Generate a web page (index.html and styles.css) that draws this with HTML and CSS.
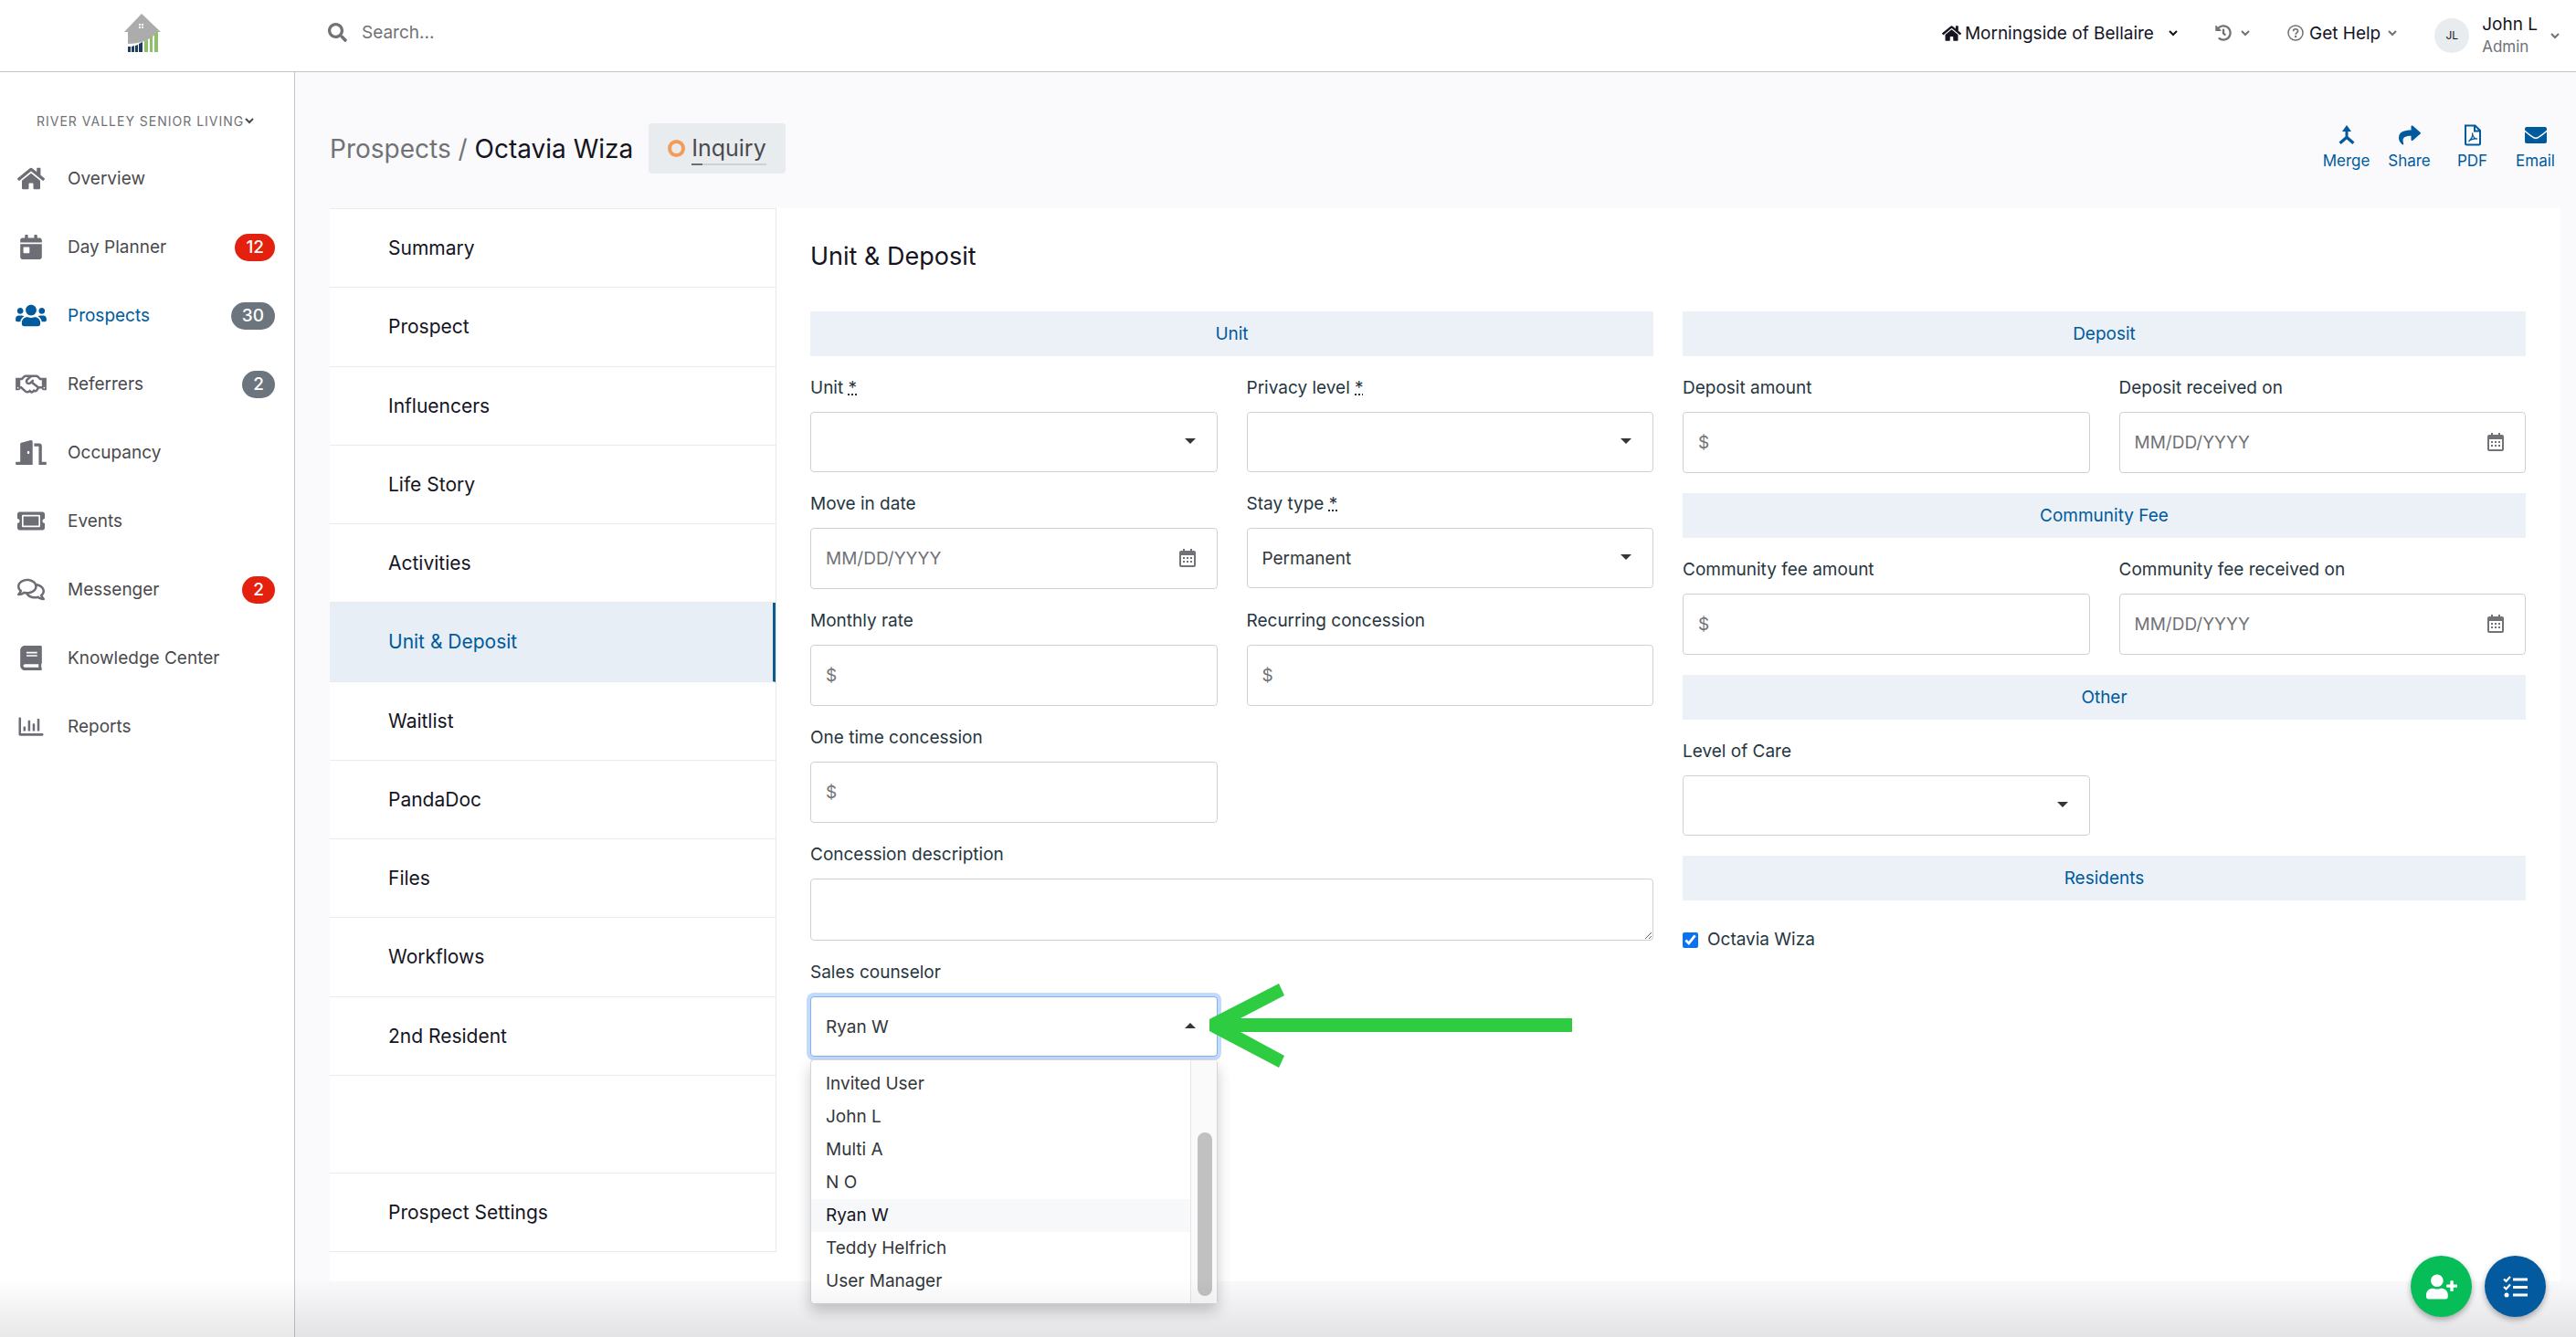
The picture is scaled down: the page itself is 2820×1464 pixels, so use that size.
FILE: index.html
```html
<!DOCTYPE html>
<html lang="en">
<head>
  <meta charset="utf-8">
  <title>Octavia Wiza - Unit &amp; Deposit</title>
  <link rel="stylesheet" href="styles.css">
</head>
<body>
  <!-- shared icons -->
  <svg class="sprite" aria-hidden="true">
    <symbol id="i-home" viewBox="0 0 576 512"><path d="M280.37 148.26L96 300.11V464a16 16 0 0 0 16 16l112.06-.29a16 16 0 0 0 15.92-16V368a16 16 0 0 1 16-16h64a16 16 0 0 1 16 16v95.64a16 16 0 0 0 16 16.05L464 480a16 16 0 0 0 16-16V300L295.67 148.26a12.19 12.19 0 0 0-15.3 0zM571.6 251.47L488 182.56V44.05a12 12 0 0 0-12-12h-56a12 12 0 0 0-12 12v72.61L318.47 43a48 48 0 0 0-61 0L4.34 251.47a12 12 0 0 0-1.6 16.9l25.5 31A12 12 0 0 0 45.15 301l235.22-193.74a12.19 12.19 0 0 1 15.3 0L530.9 301a12 12 0 0 0 16.9-1.6l25.5-31a12 12 0 0 0-1.7-16.93z"/></symbol>
    <symbol id="i-chevron" viewBox="0 0 10 8"><path d="M1 2l4 4 4-4" fill="none" stroke="currentColor" stroke-width="2"/></symbol>
    <symbol id="i-calendar" viewBox="0 0 18 20"><path fill-rule="evenodd" d="M4 0h2v2h6V0h2v2h2a2 2 0 0 1 2 2v14a2 2 0 0 1-2 2H2a2 2 0 0 1-2-2V4a2 2 0 0 1 2-2h2zM2 7v11h14V7z"/><path d="M4 9h2v2H4zm4 0h2v2H8zm4 0h2v2h-2zM4 13h2v2H4zm4 0h2v2H8zm4 0h2v2h-2z"/></symbol>
  </svg>

  <header class="topbar">
    <a class="logo" href="#" aria-label="Home">
      <svg width="40" height="42" viewBox="0 0 40 42">
        <path fill="#acacac" d="M19 0L40 20h-3.500C29 29 17 33 4 33V20H0z"/>
        <path fill="#fff" d="M16 11h2v2h-2zm3 0h2v2h-2zm-3 3h2v2h-2zm3 0h2v2h-2z"/>
        <path fill="#1f3c5f" d="M4 36h3v6H4zm4 0l3-1v7H8zm4-1l3-1v8h-3zm4-2l4-2v11h-4z"/>
        <path fill="#8cc069" d="M22 30l4-2v14h-4zm6-4l3-2v18h-3zm5-4l4-3v23h-4z"/>
      </svg>
    </a>
    <label class="search">
      <svg class="search-icon" viewBox="0 0 512 512"><path d="M505 442.7L405.300 343c-4.500-4.500-10.600-7-17-7H372c27.600-35.300 44-79.700 44-128C416 93.100 322.900 0 208 0S0 93.100 0 208s93.100 208 208 208c48.300 0 92.700-16.400 128-44v16.300c0 6.400 2.500 12.500 7 17l99.700 99.700c9.400 9.400 24.600 9.400 33.900 0l28.300-28.300c9.400-9.400 9.400-24.600.1-34zM208 336c-70.700 0-128-57.200-128-128 0-70.700 57.200-128 128-128 70.700 0 128 57.200 128 128 0 70.700-57.200 128-128 128z"/></svg>
      <input type="text" placeholder="Search..." aria-label="Search">
    </label>
    <div class="top-links">
      <button class="top-btn">
        <svg class="top-home" viewBox="0 0 576 512"><use href="#i-home"/></svg>
        Morningside of Bellaire
        <svg class="chevron chevron-far"><use href="#i-chevron"/></svg>
      </button>
      <button class="top-btn muted" aria-label="History">
        <svg class="top-icon" viewBox="0 0 512 512"><path d="M504 255.531c.253 136.640-111.180 248.372-247.820 248.468-59.015.042-113.223-20.530-155.822-54.911-11.077-8.940-11.905-25.541-1.839-35.607l11.267-11.267c8.609-8.609 22.353-9.551 31.891-1.984C173.062 425.135 212.781 440 256 440c101.705 0 184-82.311 184-184 0-101.705-82.311-184-184-184-48.814 0-93.149 18.969-126.068 49.932l50.754 50.754c10.080 10.080 2.941 27.314-11.313 27.314H24c-8.837 0-16-7.163-16-16V38.627c0-14.254 17.234-21.393 27.314-11.314l49.372 49.372C129.209 34.136 189.552 8 256 8c136.810 0 247.747 110.780 248 247.531zm-180.912 78.784l9.823-12.630c8.138-10.463 6.253-25.542-4.210-33.679L288 256.349V152c0-13.255-10.745-24-24-24h-16c-13.255 0-24 10.745-24 24v135.651l65.409 50.874c10.463 8.137 25.541 6.253 33.679-4.210z"/></svg>
        <svg class="chevron"><use href="#i-chevron"/></svg>
      </button>
      <button class="top-btn">
        <svg class="top-icon muted" viewBox="0 0 18 18"><circle cx="9" cy="9" r="8" fill="none" stroke="currentColor" stroke-width="1.500"/><path d="M6.500 7.200C6.500 4 11.600 4 11.600 7c0 1.800-2.500 1.900-2.500 3.700" fill="none" stroke="currentColor" stroke-width="1.700"/><circle cx="9.100" cy="13" r="1.200"/></svg>
        Get Help
        <svg class="chevron muted"><use href="#i-chevron"/></svg>
      </button>
      <button class="top-btn user">
        <span class="avatar">JL</span>
        <span class="user-text"><span class="user-name">John L</span><span class="user-role">Admin</span></span>
        <svg class="chevron muted"><use href="#i-chevron"/></svg>
      </button>
    </div>
  </header>

  <div class="layout">
    <aside class="sidebar">
      <button class="org">River Valley Senior Living<svg class="chevron"><use href="#i-chevron"/></svg></button>
      <nav>
        <a class="side-link" href="#"><svg class="side-icon"><use href="#i-home"/></svg>Overview</a>
        <a class="side-link" href="#"><svg class="side-icon" viewBox="0 0 448 512"><path d="M0 464c0 26.500 21.500 48 48 48h352c26.500 0 48-21.500 48-48V192H0v272zm64-192c0-8.800 7.200-16 16-16h96c8.800 0 16 7.200 16 16v96c0 8.800-7.200 16-16 16H80c-8.800 0-16-7.200-16-16v-96zM400 64h-48V16c0-8.800-7.200-16-16-16h-32c-8.800 0-16 7.200-16 16v48H160V16c0-8.800-7.200-16-16-16h-32c-8.800 0-16 7.200-16 16v48H48C21.500 64 0 85.500 0 112v48h448v-48c0-26.500-21.500-48-48-48z"/></svg>Day Planner<span class="badge red">12</span></a>
        <a class="side-link active" href="#"><svg class="side-icon wide" viewBox="0 0 640 512"><path d="M96 224c35.300 0 64-28.700 64-64s-28.700-64-64-64-64 28.700-64 64 28.700 64 64 64zm448 0c35.300 0 64-28.700 64-64s-28.700-64-64-64-64 28.700-64 64 28.700 64 64 64zm32 32h-64c-17.600 0-33.500 7.100-45.100 18.600 40.300 22.100 68.900 62 75.100 109.400h66c17.700 0 32-14.300 32-32v-32c0-35.300-28.700-64-64-64zm-256 0c61.900 0 112-50.100 112-112S381.900 32 320 32 208 82.100 208 144s50.100 112 112 112zm76.800 32h-8.300c-20.800 10-43.900 16-68.500 16s-47.600-6-68.500-16h-8.300C179.600 288 128 339.600 128 403.200V432c0 26.500 21.500 48 48 48h288c26.500 0 48-21.500 48-48v-28.800c0-63.600-51.600-115.200-115.200-115.200zm-223.700-13.400C161.500 263.100 145.600 256 128 256H64c-35.300 0-64 28.700-64 64v32c0 17.700 14.300 32 32 32h65.900c6.300-47.400 34.900-87.300 75.200-109.400z"/></svg>Prospects<span class="badge">30</span></a>
        <a class="side-link" href="#"><svg class="side-icon wide" viewBox="0 0 640 512"><path d="M519.2 127.9l-47.6-47.6A56.252 56.252 0 0 0 432 64H205.200c-14.800 0-29.100 5.900-39.600 16.300L118 127.900H0v255.700h64c17.600 0 31.800-14.200 31.900-31.700h9.100l84.600 76.400c30.900 25.100 73.800 25.700 105.600 3.800 12.500 10.800 26 15.900 41.100 15.900 18.200 0 35.300-7.400 48.800-24 22.100 8.700 48.200 2.600 64-16.800l26.200-32.300c5.600-6.900 9.100-14.800 10.900-23h57.900c.1 17.500 14.400 31.700 31.900 31.700h64V127.900H519.200zM48 351.600c-8.800 0-16-7.200-16-16s7.200-16 16-16 16 7.200 16 16c0 8.900-7.200 16-16 16zm390-6.900l-26.100 32.200c-2.800 3.400-7.800 4-11.300 1.200l-23.900-19.400-30 36.500c-6 7.300-15 4.800-18 2.400l-36.800-31.500-15.600 19.200c-13.900 17.100-39.200 19.700-55.300 6.600l-97.300-88H96V175.800h41.900l61.700-61.600c2-.8 3.700-1.500 5.700-2.300H262l-38.700 35.500c-29.400 26.900-31.100 72.300-4.400 101.300 14.800 16.200 61.200 41.200 101.500 4.400l8.200-7.500 108.200 87.800c3.400 2.800 3.900 7.900 1.200 11.300zm106-40.800h-69.200c-2.300-2.800-4.900-5.400-7.700-7.700l-102.700-83.400 12.500-11.400c6.500-6 7-16.100 1-22.600L367 167.100c-6-6.500-16.100-6.900-22.600-1l-55.200 50.600c-9.500 8.700-25.700 9.400-34.600 0-9.300-9.900-8.500-25.100 1.200-33.900l65.600-60.100c7.400-6.800 17-10.500 27-10.500l83.700-.2c2.100 0 4.100.8 5.500 2.300l61.700 61.600H544v128zm48 47.700c-8.800 0-16-7.200-16-16s7.200-16 16-16 16 7.200 16 16c0 8.900-7.200 16-16 16z"/></svg>Referrers<span class="badge">2</span></a>
        <a class="side-link" href="#"><svg class="side-icon wide" viewBox="0 0 640 512"><path d="M624 448h-80V113.450C544 86.190 522.470 64 496 64H384v64h96v384h144c8.840 0 16-7.160 16-16v-32c0-8.840-7.160-16-16-16zM312.240 1.010l-192 49.740C105.990 54.440 96 67.700 96 82.920V448H16c-8.840 0-16 7.160-16 16v32c0 8.840 7.160 16 16 16h336V33.180c0-21.580-19.560-37.410-39.760-32.170zM264 288c-13.250 0-24-14.330-24-32s10.750-32 24-32 24 14.330 24 32-10.750 32-24 32z"/></svg>Occupancy</a>
        <a class="side-link" href="#"><svg class="side-icon" viewBox="0 0 576 512"><path d="M128 160h320v192H128V160zm400 96c0 26.510 21.490 48 48 48v96c0 26.510-21.490 48-48 48H48c-26.510 0-48-21.490-48-48v-96c26.510 0 48-21.490 48-48s-21.490-48-48-48v-96c0-26.510 21.490-48 48-48h480c26.510 0 48 21.490 48 48v96c-26.510 0-48 21.490-48 48zm-48-104c0-13.255-10.745-24-24-24H120c-13.255 0-24 10.745-24 24v208c0 13.255 10.745 24 24 24h336c13.255 0 24-10.745 24-24V152z"/></svg>Events</a>
        <a class="side-link" href="#"><svg class="side-icon" viewBox="0 0 576 512"><path d="M532 386.200c27.500-27.100 44-61.100 44-98.200 0-80-76.500-146.100-176.200-157.900C368.300 72.500 294.300 32 208 32 93.100 32 0 103.600 0 192c0 37 16.500 71 44 98.200-15.300 30.700-37.300 54.500-37.700 54.900-6.300 6.700-8.100 16.500-4.400 25 3.600 8.500 12 14 21.200 14 53.500 0 96.700-20.200 125.200-38.800 9.200 2.100 18.700 3.700 28.400 4.900C208.100 407.600 281.800 448 368 448c20.800 0 40.800-2.400 59.800-6.800C456.300 459.700 499.400 480 553 480c9.200 0 17.500-5.500 21.200-14 3.600-8.500 1.900-18.300-4.400-25-.4-.3-22.500-24.100-37.800-54.800zm-392.800-92.300L122.100 305c-14.100 9.100-28.500 16.300-43.100 21.400 2.700-4.700 5.400-9.700 8-14.800l15.500-31.100L77.700 256C64.200 242.600 48 220.700 48 192c0-60.700 73.300-112 160-112s160 51.300 160 112-73.300 112-160 112c-16.500 0-33-1.900-49-5.600l-19.800-4.500zM498.300 352l-24.700 24.400 15.500 31.100c2.600 5.100 5.300 10.100 8 14.800-14.600-5.100-29-12.300-43.100-21.400l-17.100-11.100-19.900 4.600c-16 3.700-32.500 5.600-49 5.600-54 0-102.200-20.100-131.300-49.700C338 339.500 416 272.900 416 192c0-3.400-.4-6.700-.7-10C479.700 196.500 528 238.800 528 288c0 28.700-16.200 50.600-29.700 64z"/></svg>Messenger<span class="badge red">2</span></a>
        <a class="side-link" href="#"><svg class="side-icon" viewBox="0 0 448 512"><path d="M448 360V24c0-13.300-10.700-24-24-24H96C43 0 0 43 0 96v320c0 53 43 96 96 96h328c13.300 0 24-10.700 24-24v-16c0-7.500-3.500-14.300-8.900-18.700-4.200-15.400-4.200-59.300 0-74.700 5.400-4.300 8.900-11.100 8.900-18.600zM128 134c0-3.300 2.700-6 6-6h212c3.300 0 6 2.700 6 6v20c0 3.300-2.700 6-6 6H134c-3.300 0-6-2.700-6-6v-20zm0 64c0-3.300 2.700-6 6-6h212c3.300 0 6 2.700 6 6v20c0 3.300-2.700 6-6 6H134c-3.300 0-6-2.700-6-6v-20zm253.400 250H96c-17.700 0-32-14.300-32-32 0-17.600 14.400-32 32-32h285.400c-1.900 17.100-1.900 46.900 0 64z"/></svg>Knowledge Center</a>
        <a class="side-link" href="#"><svg class="side-icon" viewBox="0 0 512 512"><path d="M396.800 352h22.400c6.400 0 12.800-6.400 12.800-12.800V108.800c0-6.400-6.400-12.800-12.800-12.800h-22.400c-6.400 0-12.800 6.400-12.800 12.800v230.400c0 6.400 6.400 12.800 12.800 12.800zm-192 0h22.400c6.400 0 12.800-6.400 12.800-12.800V140.800c0-6.400-6.400-12.800-12.800-12.800h-22.400c-6.400 0-12.800 6.400-12.800 12.800v198.400c0 6.400 6.400 12.800 12.800 12.800zm96 0h22.400c6.400 0 12.800-6.400 12.800-12.800V204.800c0-6.400-6.400-12.800-12.800-12.800h-22.400c-6.400 0-12.800 6.400-12.800 12.800v134.400c0 6.400 6.400 12.800 12.800 12.800zM496 400H48V80c0-8.840-7.160-16-16-16H16C7.160 64 0 71.160 0 80v336c0 17.670 14.330 32 32 32h464c8.840 0 16-7.160 16-16v-16c0-8.840-7.160-16-16-16zm-387.200-48h22.400c6.400 0 12.800-6.400 12.800-12.800v-70.400c0-6.400-6.400-12.800-12.800-12.800h-22.400c-6.400 0-12.800 6.400-12.800 12.800v70.400c0 6.400 6.400 12.800 12.800 12.800z"/></svg>Reports</a>
      </nav>
    </aside>

    <main class="main">
      <div class="page-head">
        <h1 class="crumbs"><a href="#">Prospects</a> <span class="slash">/</span> Octavia Wiza</h1>
        <button class="stage"><span class="stage-dot"></span><span class="stage-name">Inquiry</span></button>
        <div class="actions">
          <button class="action"><svg width="24" height="24" viewBox="0 0 24 24"><path d="M12 1l5 7h-3.500v5.500l7 6-2.200 2.500-6.300-5.500L5.700 22l-2.200-2.500 7-6V8H7z"/></svg>Merge</button>
          <button class="action"><svg width="24" height="24" viewBox="0 0 512 512"><path d="M503.691 189.836L327.687 37.851C312.281 24.546 288 35.347 288 56.015v80.053C127.371 137.907 0 170.100 0 322.326c0 61.441 39.581 122.309 83.333 154.132 13.653 9.931 33.111-2.533 28.077-18.631C66.066 312.814 132.917 274.316 288 272.085V360c0 20.700 24.300 31.453 39.687 18.164l176.004-152c11.071-9.562 11.086-26.753 0-36.328z"/></svg>Share</button>
          <button class="action"><svg width="24" height="24" viewBox="0 0 24 24"><g fill="none" stroke="currentColor"><path stroke-width="2" d="M4 1.500h10.500L20 7v14a1.500 1.500 0 0 1-1.500 1.500h-13A1.500 1.500 0 0 1 4 21zM14 2v5.500h6"/><path stroke-width="1.300" d="M11.500 9.500c1 3-.500 6-4 9.500M11.800 11c.5 3 2.200 5 5.200 5-3-.7-6 .3-8 1.500"/></g></svg>PDF</button>
          <button class="action"><svg width="24" height="24" viewBox="0 0 24 24"><path d="M2 3h20a2 2 0 0 1 2 2v1.500c-3 2.500-7 5.500-9.500 7.300-1.500 1-3.500 1-5 0C7 12 3 9 0 6.500V5a2 2 0 0 1 2-2z"/><path d="M0 8.500c3 2.500 6.500 5 9 6.800 1.700 1.100 4.300 1.100 6 0 2.500-1.800 6-4.300 9-6.800V19a2 2 0 0 1-2 2H2a2 2 0 0 1-2-2z"/></svg>Email</button>
        </div>
      </div>

      <div class="card">
        <nav class="tabs">
          <a href="#">Summary</a>
          <a href="#">Prospect</a>
          <a href="#">Influencers</a>
          <a href="#">Life Story</a>
          <a href="#">Activities</a>
          <a class="current" href="#">Unit &amp; Deposit</a>
          <a href="#">Waitlist</a>
          <a href="#">PandaDoc</a>
          <a href="#">Files</a>
          <a href="#">Workflows</a>
          <a href="#">2nd Resident</a>
          <a class="settings" href="#">Prospect Settings</a>
        </nav>

        <form class="pane">
          <h2>Unit &amp; Deposit</h2>
          <div class="columns">
            <section class="fields left">
              <h3>Unit</h3>
              <div class="field">
                <label for="unit">Unit <abbr title="required">*</abbr></label>
                <div class="select"><select id="unit"><option></option></select></div>
              </div>
              <div class="field">
                <label for="privacy">Privacy level <abbr title="required">*</abbr></label>
                <div class="select"><select id="privacy"><option></option></select></div>
              </div>
              <div class="field">
                <label for="move-in">Move in date</label>
                <div class="date"><input id="move-in" type="text" placeholder="MM/DD/YYYY"><svg class="cal"><use href="#i-calendar"/></svg></div>
              </div>
              <div class="field">
                <label for="stay">Stay type <abbr title="required">*</abbr></label>
                <div class="select"><select id="stay"><option>Permanent</option></select></div>
              </div>
              <div class="field">
                <label for="rate">Monthly rate</label>
                <input id="rate" type="text" placeholder="$">
              </div>
              <div class="field">
                <label for="recurring">Recurring concession</label>
                <input id="recurring" type="text" placeholder="$">
              </div>
              <div class="field first">
                <label for="onetime">One time concession</label>
                <input id="onetime" type="text" placeholder="$">
              </div>
              <div class="field full">
                <label for="description">Concession description</label>
                <textarea id="description"></textarea>
              </div>
              <div class="field">
                <label for="counselor">Sales counselor</label>
                <div class="select open">
                  <select id="counselor"><option>Ryan W</option></select>
                  <div class="menu">
                    <ul>
                      <li>Invited User</li>
                      <li>John L</li>
                      <li>Multi A</li>
                      <li>N O</li>
                      <li class="selected">Ryan W</li>
                      <li>Teddy Helfrich</li>
                      <li>User Manager</li>
                    </ul>
                    <div class="track"><div class="thumb"></div></div>
                  </div>
                  <svg class="arrow" width="398" height="92" viewBox="0 0 398 92"><path fill="#2ecc40" d="M0 39L76 0l6 13-48 25h363v15H34l48 26-6 13L0 52z"/></svg>
                </div>
              </div>
            </section>

            <section class="fields">
              <h3>Deposit</h3>
              <div class="field">
                <label for="deposit">Deposit amount</label>
                <input id="deposit" type="text" placeholder="$">
              </div>
              <div class="field">
                <label for="deposit-date">Deposit received on</label>
                <div class="date"><input id="deposit-date" type="text" placeholder="MM/DD/YYYY"><svg class="cal"><use href="#i-calendar"/></svg></div>
              </div>
              <h3>Community Fee</h3>
              <div class="field">
                <label for="fee">Community fee amount</label>
                <input id="fee" type="text" placeholder="$">
              </div>
              <div class="field">
                <label for="fee-date">Community fee received on</label>
                <div class="date"><input id="fee-date" type="text" placeholder="MM/DD/YYYY"><svg class="cal"><use href="#i-calendar"/></svg></div>
              </div>
              <h3>Other</h3>
              <div class="field">
                <label for="care">Level of Care</label>
                <div class="select"><select id="care"><option></option></select></div>
              </div>
              <h3>Residents</h3>
              <label class="check full"><input type="checkbox" checked>Octavia Wiza</label>
            </section>
          </div>
        </form>
      </div>
    </main>
  </div>

  <div class="fade"></div>
  <div class="fabs">
    <button class="fab green" aria-label="Add prospect"><svg width="34" height="28" viewBox="0 0 640 512"><path d="M624 208h-64v-64c0-8.800-7.200-16-16-16h-32c-8.800 0-16 7.200-16 16v64h-64c-8.800 0-16 7.200-16 16v32c0 8.800 7.200 16 16 16h64v64c0 8.800 7.200 16 16 16h32c8.800 0 16-7.200 16-16v-64h64c8.800 0 16-7.200 16-16v-32c0-8.800-7.200-16-16-16zm-400 48c70.700 0 128-57.300 128-128S294.700 0 224 0 96 57.300 96 128s57.300 128 128 128zm89.600 32h-16.700c-22.200 10.200-46.900 16-72.900 16s-50.600-5.800-72.900-16h-16.700C60.200 288 0 348.200 0 422.400V464c0 26.500 21.500 48 48 48h352c26.500 0 48-21.500 48-48v-41.600c0-74.200-60.200-134.400-134.400-134.400z"/></svg></button>
    <button class="fab blue" aria-label="Tasks"><svg width="28" height="24" viewBox="0 0 28 24"><path d="M11 2.500h16v3H11zm0 8.500h16v3H11zm0 8.500h16v3H11z"/><circle cx="4" cy="21" r="2.500"/><path d="M1 3.500l2.500 2.500L8 1M1 12l2.500 2.500L8 9.500" fill="none" stroke="currentColor" stroke-width="2.200"/></svg></button>
  </div>
</body>
</html>
```

FILE: styles.css
```css
* {
  box-sizing: border-box;
}
body {
  margin: 0;
  min-height: 100vh;
  display: flex;
  flex-direction: column;
  font-family: Inter, "Open Sans", sans-serif;
  font-size: 19px;
  color: #15141f;
  background: #fafafd;
}
a {
  color: inherit;
  text-decoration: none;
}
button {
  font: inherit;
  color: inherit;
  background: none;
  border: 0;
  padding: 0;
}
h1, h2, h3, ul {
  margin: 0;
  padding: 0;
  font-weight: 400;
}
svg {
  fill: currentColor;
  flex: none;
}
.sprite {
  position: absolute;
  width: 0;
  height: 0;
}
.muted {
  color: #707276;
}
.chevron {
  width: 10px;
  height: 8px;
}

/* top bar */
.topbar {
  height: 79px;
  display: flex;
  align-items: center;
  background: #fff;
  border-bottom: 1px solid #c3c3cd;
}
.logo {
  width: 359px;
  padding: 0 0 6px 136px;
  display: flex;
}
.search {
  flex: 1;
  display: flex;
  align-items: center;
  gap: 16px;
  padding-bottom: 8px;
  color: #707276;
}
.search-icon {
  width: 21px;
  height: 21px;
}
.search input {
  flex: 1;
  border: 0;
  outline: 0;
  padding: 0;
  font: inherit;
}
.search input::placeholder {
  color: #707276;
}
.top-links {
  display: flex;
  align-items: center;
  padding: 0 18px 6px 0;
  gap: 41px;
}
.top-btn {
  display: flex;
  align-items: center;
  gap: 8px;
}
.top-btn.muted {
  gap: 12px;
}
.chevron-far {
  margin-left: 8px;
}
.top-home {
  width: 21px;
  height: 19px;
  margin-right: -4px;
}
.top-icon {
  width: 18px;
  height: 18px;
  margin-right: -2px;
}
.user {
  gap: 14px;
  padding-top: 6px;
}
.avatar {
  width: 38px;
  height: 38px;
  border-radius: 50%;
  background: #e9ecef;
  font-size: 12px;
  line-height: 38px;
}
.user-text {
  display: flex;
  flex-direction: column;
  text-align: left;
  line-height: 24px;
}
.user-role {
  font-size: 17px;
  color: #707276;
}

/* sidebar */
.layout {
  flex: 1;
  display: flex;
}
.sidebar {
  width: 323px;
  background: #fff;
  border-right: 1px solid #c3c3cd;
}
.org {
  height: 79px;
  padding: 27px 0 0 40px;
  display: flex;
  align-items: center;
  font-size: 14px;
  letter-spacing: 1px;
  white-space: nowrap;
  text-transform: uppercase;
  color: #707276;
}
.org .chevron {
  margin-left: 1px;
  color: #4a4a4e;
}
.side-link {
  height: 75px;
  padding: 0 21px 0 15px;
  display: flex;
  align-items: center;
  color: #4a4a4e;
}
.side-icon {
  width: 30px;
  height: 27px;
  margin: 0 25px 0 4px;
  color: #6c6d75;
}
.side-icon.wide {
  width: 34px;
  margin: 0 23px 0 2px;
}
.side-link.active, .side-link.active .side-icon {
  color: #005a9c;
}
.badge {
  margin-left: auto;
  padding: 0 12px;
  border-radius: 15px;
  background: #6c757d;
  color: #fff;
  font-weight: 500;
  line-height: 30px;
}
.badge.red {
  background: #e4200f;
}

/* page heading */
.main {
  flex: 1;
  display: flex;
  flex-direction: column;
  padding: 0 17px 61px 38px;
}
.page-head {
  height: 149px;
  padding-top: 18px;
  display: flex;
  align-items: center;
}
.crumbs {
  font-size: 28px;
}
.crumbs a, .slash {
  color: #707276;
}
.stage {
  margin-left: 17px;
  height: 55px;
  padding: 0 21px;
  display: flex;
  align-items: center;
  gap: 7px;
  border-radius: 4px;
  background: #e9ecef;
  font-size: 25px;
  color: #4a4a4e;
}
.stage-dot {
  width: 19px;
  height: 19px;
  border: 4px solid #f39c5a;
  border-radius: 50%;
}
.stage-name {
  line-height: 34px;
  border-bottom: 2px solid;
  border-image: linear-gradient(90deg, #6c6d75 16%, #cfd2d5 16%) 1;
}
.actions {
  margin-left: auto;
  padding-bottom: 4px;
  display: flex;
}
.action {
  width: 69px;
  display: flex;
  flex-direction: column;
  align-items: center;
  gap: 6px;
  font-size: 17px;
  line-height: 20px;
  color: #005a9c;
}
.action:last-child {
  width: 55px;
  margin-left: 7px;
}

/* card */
.card {
  flex: 1;
  display: flex;
  background: #fff;
}
.tabs {
  width: 489px;
  display: flex;
  flex-direction: column;
  margin-bottom: 32px;
  border: 1px solid #e9eaec;
  border-left: 0;
  font-size: 21px;
}
.tabs a {
  flex: 1;
  display: flex;
  align-items: center;
  padding-left: 64px;
  border-bottom: 1px solid #e9eaec;
}
.tabs .current {
  background: #e7eef5;
  color: #005a9c;
  border-right: 3px solid #0c5c8f;
}
.tabs .settings {
  margin-top: 106px;
  border-top: 1px solid #e9eaec;
  border-bottom: 0;
}
.pane {
  flex: 1;
  padding: 37px 38px 0 37px;
}
.pane h2 {
  font-size: 27px;
  line-height: 32px;
  margin-bottom: 44px;
}
.columns {
  display: grid;
  grid-template-columns: 1fr 1fr;
  gap: 32px;
  align-items: start;
}
.fields {
  display: grid;
  grid-template-columns: 1fr 1fr;
  column-gap: 32px;
  align-items: start;
  color: #263640;
}
.fields h3 {
  grid-column: 1 / -1;
  margin-bottom: 21px;
  background: #ecf1f8;
  color: #005a9c;
  font-size: 19px;
  line-height: 49px;
  text-align: center;
}
.field {
  margin-bottom: 22px;
}
.left .field {
  margin-bottom: 21px;
}
.full {
  grid-column: 1 / -1;
}
.first {
  grid-column: 1;
}
.field label {
  display: block;
  line-height: 28px;
  margin-bottom: 12px;
}
.field input, .field select, .field textarea {
  display: block;
  width: 100%;
  height: 67px;
  padding: 0 16px;
  border: 1px solid #cfd1d4;
  border-radius: 4px;
  background: #fff;
  color: #33373b;
  font: inherit;
  appearance: none;
}
.field select {
  height: 66px;
}
.field textarea {
  height: 68px;
  resize: vertical;
}
.field ::placeholder {
  color: #707276;
  opacity: 1;
}
.select, .date {
  position: relative;
}
.select::after {
  content: "";
  position: absolute;
  right: 24px;
  top: 29px;
  border: 6px solid transparent;
  border-top-color: #33373b;
  border-bottom: 0;
}
.select.open::after {
  border-top: 0;
  border-bottom: 6px solid #33373b;
}
.open select {
  border-color: #80b4ee;
  box-shadow: 0 0 0 4px #c4dafa;
}
.cal {
  position: absolute;
  right: 24px;
  top: 23px;
  width: 18px;
  height: 20px;
  color: #707276;
}
.check {
  display: flex;
  align-items: center;
  gap: 10px;
  padding-top: 12px;
  line-height: 20px;
}
.check input {
  width: 17px;
  height: 17px;
  margin: 0;
  accent-color: #0b72ee;
}

/* opened dropdown */
.menu {
  position: absolute;
  top: 69px;
  left: 0;
  width: 100%;
  height: 268px;
  display: flex;
  border: 1px solid #d5d5d8;
  border-radius: 4px;
  background: #fff;
  box-shadow: 0 8px 16px rgba(0, 0, 0, 0.2);
  color: #33373b;
}
.menu ul {
  flex: 1;
  padding-top: 8px;
  list-style: none;
}
.menu li {
  padding-left: 16px;
  line-height: 36px;
}
.menu .selected {
  background: #f7f8fa;
  color: #15141f;
}
.track {
  width: 29px;
  display: flex;
  align-items: flex-end;
  padding: 0 5px 8px 7px;
  border-left: 1px solid #e6e6e6;
  background: #fafafa;
}
.thumb {
  width: 16px;
  height: 179px;
  border-radius: 8px;
  background: #c1c1c1;
}
.arrow {
  position: absolute;
  left: calc(100% - 9px);
  top: -14px;
}

/* floating buttons over a soft bottom fade */
.fade {
  position: fixed;
  left: 0;
  right: 0;
  bottom: 0;
  height: 64px;
  background: linear-gradient(rgba(0, 0, 0, 0), rgba(0, 0, 0, 0.09));
  pointer-events: none;
}
.fabs {
  position: fixed;
  right: 33px;
  bottom: 22px;
  display: flex;
  gap: 14px;
}
.fab {
  width: 67px;
  height: 67px;
  display: flex;
  align-items: center;
  justify-content: center;
  border-radius: 50%;
  color: #fff;
  box-shadow: 0 3px 6px rgba(0, 0, 0, 0.3);
}
.green {
  background: #06bd58;
}
.blue {
  background: #035a9e;
}
```
